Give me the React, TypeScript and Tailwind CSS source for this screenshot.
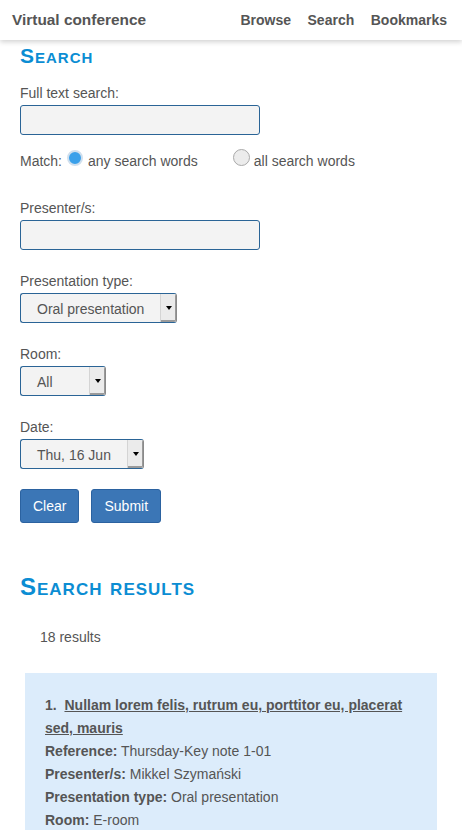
import React from "react";

function Select({ value, width }: { value: string; width: string }) {
  return (
    <div
      className={`flex h-[30px] ${width} rounded-[3px] border border-[#2a6496] border-r-[#8a8a8a] bg-[#f3f3f3] overflow-hidden`}
    >
      <span className="flex-1 pl-4 pt-px leading-[28px] text-[14px] text-[#555] whitespace-nowrap">{value}</span>
      <span className="flex w-[16px] items-center justify-center border-l border-[#d4d4d4] bg-[#ebebeb] shadow-[inset_-1px_-2px_0_#9a9a9a]">
        <span className="block h-0 w-0 border-l-[3px] border-r-[3px] border-t-[4px] border-l-transparent border-r-transparent border-t-black" />
      </span>
    </div>
  );
}

function Label({ children }: { children: React.ReactNode }) {
  return <div className="mb-[2px] pt-px text-[14px] leading-[19px] text-[#555]">{children}</div>;
}

export default function App() {
  return (
    <div className="min-h-screen bg-white text-[#555]" style={{ fontFamily: '"Liberation Sans", Arial, sans-serif' }}>
      <header className="relative z-10 flex h-10 items-center justify-between bg-white pl-3 pr-[15px] shadow-[0_2px_5px_rgba(0,0,0,0.18)]">
        <div className="text-[15.4px] font-bold text-[#555]">Virtual conference</div>
        <nav className="flex gap-[16.5px] text-[14px] font-bold text-[#555]">
          <span>Browse</span>
          <span>Search</span>
          <span>Bookmarks</span>
        </nav>
      </header>

      <main className="px-5">
        <h1 className="mt-[4px] text-[21px] font-bold leading-[24px] tracking-[1px] text-[#0b8dd3] [font-variant:small-caps]">
          Search
        </h1>

        <div className="mt-[15px]">
          <Label>Full text search:</Label>
          <div className="h-[30px] w-[240px] rounded-[3px] border border-[#2a6496] bg-[#f3f3f3]" />
        </div>

        <div className="mt-4 flex items-start pt-px text-[14px] leading-[19px] text-[#555]">
          <span>Match:</span>
          <span className="ml-[5px] mt-[-2px] h-4 w-4 rounded-full border-[2px] border-[#cfdfee] bg-[#3aa0ea]" />
          <span className="ml-[5px]">any search words</span>
          <span className="ml-[35px] mt-[-3px] h-[17px] w-[17px] rounded-full border border-[#a9a9a9] bg-[#ececec]" />
          <span className="ml-[4px]">all search words</span>
        </div>

        <div className="mt-[27px]">
          <Label>Presenter/s:</Label>
          <div className="h-[30px] w-[240px] rounded-[3px] border border-[#2a6496] bg-[#f3f3f3]" />
        </div>

        <div className="mt-[21px]">
          <Label>Presentation type:</Label>
          <Select value="Oral presentation" width="w-[157px]" />
        </div>

        <div className="mt-[21px]">
          <Label>Room:</Label>
          <Select value="All" width="w-[86px]" />
        </div>

        <div className="mt-[21px]">
          <Label>Date:</Label>
          <Select value="Thu, 16 Jun" width="w-[124px]" />
        </div>

        <div className="mt-5 flex gap-3">
          <button className="h-[34px] rounded-[3px] border border-[#2b62a0] bg-[#3b76b6] px-3 pt-px text-[14px] text-white">
            Clear
          </button>
          <button className="h-[34px] rounded-[3px] border border-[#2b62a0] bg-[#3b76b6] px-3 pt-px text-[14px] text-white">
            Submit
          </button>
        </div>

        <h2 className="mt-[50px] text-[24px] font-bold leading-[28px] tracking-[1px] text-[#0b8dd3] [font-variant:small-caps]">
          Search results
        </h2>

        <div className="mt-[26px] pl-5 pt-px text-[14px] leading-[19px] text-[#555]">18 results</div>

        <div className="mx-[5px] mt-[26px] bg-[#dcecfb] px-5 pb-5 pt-[21px] text-[14px] leading-[23px] text-[#555]">
          <div>
            <span className="font-bold">1.{"\u00a0 "}</span>
            <a className="font-bold underline">Nullam lorem felis, rutrum eu, porttitor eu, placerat sed, mauris</a>
          </div>
          <div>
            <span className="font-bold">Reference:</span> Thursday-Key note 1-01
          </div>
          <div>
            <span className="font-bold">Presenter/s:</span> Mikkel Szymański
          </div>
          <div>
            <span className="font-bold">Presentation type:</span> Oral presentation
          </div>
          <div>
            <span className="font-bold">Room:</span> E-room
          </div>
          <div>
            <span className="font-bold">Date:</span> Thu, 16 Jun
          </div>
        </div>
      </main>
    </div>
  );
}
